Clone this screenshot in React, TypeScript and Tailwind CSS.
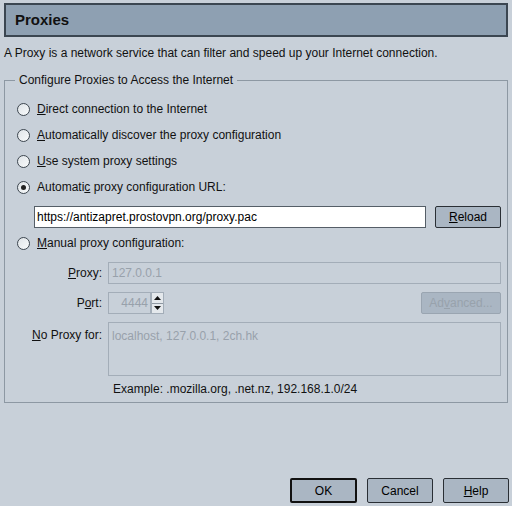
import React, { useState } from "react";

const font = { fontFamily: "'Liberation Sans', Arial, sans-serif" };

function Radio({ checked }: { checked?: boolean }) {
  return (
    <span className="flex h-[13px] w-[13px] items-center justify-center rounded-full border border-[#3e4750] bg-gradient-to-br from-[#dfe4e8] to-[#f8fafb]">
      {checked && <span className="h-[5px] w-[5px] rounded-full bg-[#222]" />}
    </span>
  );
}

function RadioRow({ checked, children }: { checked?: boolean; children: React.ReactNode }) {
  return (
    <div className="flex h-[26px] items-center gap-[7px] pl-[12px]">
      <Radio checked={checked} />
      <span>{children}</span>
    </div>
  );
}

function Btn({ children, def, disabled, className = "" }: { children: React.ReactNode; def?: boolean; disabled?: boolean; className?: string }) {
  return (
    <button
      className={`flex h-[22px] items-center justify-center rounded-[2px] ${
        disabled
          ? "border border-[#9aa5b1] text-[#98a2ac]"
          : def
          ? "border-2 border-[#111] text-black"
          : "border border-[#2a2f35] text-black"
      } bg-[#aab6c3] ${className}`}
    >
      {children}
    </button>
  );
}

export default function App() {
  const [url, setUrl] = useState("https://antizapret.prostovpn.org/proxy.pac");

  return (
    <div style={font} className="flex h-[506px] w-[512px] flex-col bg-[#c8d0d9] text-[12px] text-[#111]">
      <div className="mx-[4px] mt-[3px] flex h-[34px] items-center border-2 border-[#3b4651] bg-[#8ea0b2] pl-[9px] text-[15px] font-bold">
        Proxies
      </div>
      <p className="ml-[4px] mt-[7px]">A Proxy is a network service that can filter and speed up your Internet connection.</p>

      <fieldset className="mx-[4px] mt-[9px] border border-[#8d98a3] px-0 pb-[4px] pt-[2px]">
        <legend className="ml-[10px] px-[4px] text-[12px]">Configure Proxies to Access the Internet</legend>
        <div className="mt-[5px]">
          <RadioRow>
            <u>D</u>irect connection to the Internet
          </RadioRow>
          <RadioRow>
            <u>A</u>utomatically discover the proxy configuration
          </RadioRow>
          <RadioRow>
            <u>U</u>se system proxy settings
          </RadioRow>
          <RadioRow checked>
            Automati<u>c</u> proxy configuration URL:
          </RadioRow>
        </div>

        <div className="mt-[6px] flex items-center pl-[29px] pr-[6px]">
          <input
            value={url}
            onChange={(e) => setUrl(e.target.value)}
            className="h-[22px] w-[392px] border border-[#555e67] bg-white px-[2px] text-[12px] text-black outline-none"
            style={font}
          />
          <Btn className="ml-auto w-[66px]">
            <u>R</u>eload
          </Btn>
        </div>

        <div className="mt-[2px]">
          <RadioRow>
            <u>M</u>anual proxy configuration:
          </RadioRow>
        </div>

        <div className="mt-[6px] flex flex-col gap-[8px] pr-[6px]">
          <div className="flex items-center">
            <span className="w-[103px] pr-[6px] text-right">
              <u>P</u>roxy:
            </span>
            <div className="flex h-[22px] flex-1 items-center border border-[#a3adb8] px-[3px] text-[#98a1ab]">127.0.0.1</div>
          </div>
          <div className="flex items-center">
            <span className="w-[103px] pr-[6px] text-right">
              P<u>o</u>rt:
            </span>
            <div className="flex h-[22px] w-[43px] items-center justify-end border border-[#a3adb8] pr-[2px] text-[#98a1ab]">4444</div>
            <div className="flex h-[22px] w-[13px] flex-col border border-[#a3adb8] bg-[#e4e8ec]">
              <span className="flex flex-1 items-center justify-center border-b border-[#8e98a2]">
                <svg width="7" height="4" viewBox="0 0 7 4"><path d="M0 4 L3.5 0 L7 4Z" fill="#111" /></svg>
              </span>
              <span className="flex flex-1 items-center justify-center">
                <svg width="7" height="4" viewBox="0 0 7 4"><path d="M0 0 L3.5 4 L7 0Z" fill="#111" /></svg>
              </span>
            </div>
            <Btn disabled className="ml-auto w-[80px]">
              Ad<u>v</u>anced...
            </Btn>
          </div>
          <div className="flex items-start">
            <span className="w-[103px] pr-[6px] pt-[4px] text-right">
              <u>N</u>o Proxy for:
            </span>
            <div className="h-[54px] flex-1 border border-[#a3adb8] px-[3px] pt-[4px] text-[#98a1ab]">localhost, 127.0.0.1, 2ch.hk</div>
          </div>
        </div>
        <p className="mt-[4px] pl-[108px]">Example: .mozilla.org, .net.nz, 192.168.1.0/24</p>
      </fieldset>

      <div className="mt-auto mb-[3px] flex justify-end gap-[10px] pr-[3px]">
        <Btn def className="h-[25px] w-[67px]">OK</Btn>
        <Btn className="h-[25px] w-[66px]">Cancel</Btn>
        <Btn className="h-[25px] w-[66px]">
          <u>H</u>elp
        </Btn>
      </div>
    </div>
  );
}
